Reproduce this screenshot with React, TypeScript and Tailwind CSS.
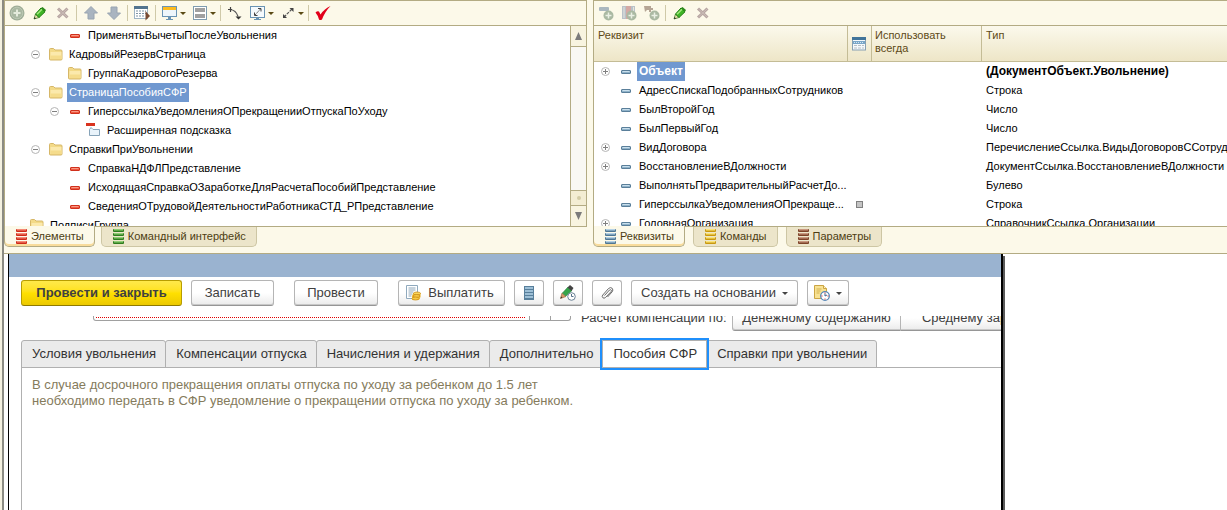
import type { ReactNode } from 'react'
import clsx from 'clsx'

interface TreeRow {
    name: string
    level: number
    icon: 'field' | 'folder' | 'hint'
    open?: boolean
    selected?: boolean
}

interface Attribute {
    name: string
    type: string
    expandable?: boolean
    selected?: boolean
    always?: boolean
}

const elements: TreeRow[] = [
    { name: 'ПрименятьВычетыПослеУвольнения', level: 2, icon: 'field' },
    { name: 'КадровыйРезервСтраница', level: 1, icon: 'folder', open: true },
    { name: 'ГруппаКадровогоРезерва', level: 2, icon: 'folder' },
    { name: 'СтраницаПособияСФР', level: 1, icon: 'folder', open: true, selected: true },
    { name: 'ГиперссылкаУведомленияОПрекращенииОтпускаПоУходу', level: 2, icon: 'field', open: true },
    { name: 'Расширенная подсказка', level: 3, icon: 'hint' },
    { name: 'СправкиПриУвольнении', level: 1, icon: 'folder', open: true },
    { name: 'СправкаНДФЛПредставление', level: 2, icon: 'field' },
    { name: 'ИсходящаяСправкаОЗаработкеДляРасчетаПособийПредставление', level: 2, icon: 'field' },
    { name: 'СведенияОТрудовойДеятельностиРаботникаСТД_РПредставление', level: 2, icon: 'field' },
    { name: 'ПодписиГруппа', level: 0, icon: 'folder' },
]

const attributes: Attribute[] = [
    { name: 'Объект', type: '(ДокументОбъект.Увольнение)', expandable: true, selected: true },
    { name: 'АдресСпискаПодобранныхСотрудников', type: 'Строка' },
    { name: 'БылВторойГод', type: 'Число' },
    { name: 'БылПервыйГод', type: 'Число' },
    { name: 'ВидДоговора', type: 'ПеречислениеСсылка.ВидыДоговоровССотруд...', expandable: true },
    { name: 'ВосстановлениеВДолжности', type: 'ДокументСсылка.ВосстановлениеВДолжности', expandable: true },
    { name: 'ВыполнятьПредварительныйРасчетДо...', type: 'Булево' },
    { name: 'ГиперссылкаУведомленияОПрекраще...', type: 'Строка', always: true },
    { name: 'ГоловнаяОрганизация', type: 'СправочникСсылка.Организации', expandable: true },
]

const indents = ['pl-[2px]', 'pl-[21px]', 'pl-[40px]', 'pl-[59px]']

const formTabs = [
    'Условия увольнения',
    'Компенсации отпуска',
    'Начисления и удержания',
    'Дополнительно',
    'Пособия СФР',
    'Справки при увольнении',
]

/* ---------- icons ---------- */

const Svg = ({ children, w = 16, h = 16 }: { children: ReactNode; w?: number; h?: number }) => (
    <svg width={w} height={h} viewBox={`0 0 ${w} ${h}`} className="shrink-0" aria-hidden="true">
        {children}
    </svg>
)

const AddIcon = () => (
    <Svg>
        <circle cx="8" cy="8" r="7.5" fill="#9fae98" />
        <circle cx="8" cy="8" r="5.8" fill="#a9b8a2" stroke="#bcc8b4" />
        <path d="M8 4.5v7M4.5 8h7" stroke="#e4ebdc" strokeWidth="2" />
    </Svg>
)

const PencilIcon = () => (
    <Svg>
        <path d="M2 14l1.5-5L7 12.5z" fill="#efe3b0" stroke="#3d7a26" strokeWidth=".8" />
        <path d="M3.5 9L9 3l4 3.8-6 5.7z" fill="#3fb526" stroke="#1f7d12" />
        <path d="M5 9.2l5-5" stroke="#a4ea7f" strokeWidth="1.4" />
        <path d="M9 3l1.5-1 3.5 3-1 1.8z" fill="#2d8a1c" />
        <path d="M2 14l.6-2 1.4 1.4z" fill="#222" />
    </Svg>
)

const CrossIcon = () => (
    <Svg>
        <path d="M3 3.5l9.5 9M12.5 3.5L3 12.5" stroke="#b7a6a2" strokeWidth="3" />
        <path d="M3.5 4l8.5 8M12 4l-8.5 8" stroke="#cbbdb8" strokeWidth="1" />
    </Svg>
)

const ArrowIcon = ({ down }: { down?: boolean }) => (
    <Svg>
        <path
            d={down ? 'M5 2h6v6h3.500L8 14.500 1.500 8H5z' : 'M5 14h6V8h3.500L8 1.500 1.500 8H5z'}
            fill="#a9b4c0"
            stroke="#98a4b1"
        />
    </Svg>
)

const TableIcon = () => (
    <Svg>
        <rect x=".5" y="1.500" width="13" height="12" fill="#fff" stroke="#9fb4c4" />
        <rect x="0" y="1" width="14" height="3" fill="#52748f" />
        <path d="M2 6h10M2 8.500h10M2 11h9" stroke="#7d93a4" strokeWidth="1.200" strokeDasharray="2 1" />
        <path d="M11.500 6v9.500L16 11z" fill="#7a4a30" />
    </Svg>
)

const WindowIcon = () => (
    <Svg>
        <rect x=".5" y="1.500" width="14" height="10" fill="#eef6fb" stroke="#6a94b4" />
        <rect x="1" y="2" width="13" height="3" fill="#fdbb1f" />
        <path d="M6 12h3v2H6zM4 14h7v1H4z" fill="#6a94b4" />
    </Svg>
)

const SplitIcon = () => (
    <Svg>
        <rect x="1.500" y="1.500" width="13" height="13" fill="#fff" stroke="#7f9cb0" />
        <path d="M3 3h10v4H3zM3 9h10v4H3z" fill="#a0a0a0" />
    </Svg>
)

const CurveIcon = () => (
    <Svg>
        <path d="M3 4.500q6 .5 8 7" fill="none" stroke="#555" strokeWidth="1.200" />
        <path d="M3.500 2v5M1 4.500h4" fill="none" stroke="#444" strokeWidth="1.200" />
        <path d="M8.500 11.500h6L11.500 14.500z" fill="#333" />
    </Svg>
)

const ScreenIcon = () => (
    <Svg>
        <rect x=".5" y="1.500" width="14" height="11" fill="#f5fafd" stroke="#6a94b4" />
        <path d="M5 10l5.500-6" stroke="#555" strokeDasharray="2 1" />
        <path d="M8 3.500h3v3M4.500 7.500v3h3" fill="none" stroke="#444" />
        <path d="M6 13h3v1H6zM4 14h7v1H4z" fill="#6a94b4" />
    </Svg>
)

const DiagonalIcon = () => (
    <Svg>
        <path d="M4 12l8-8" stroke="#555" strokeWidth="1.200" strokeDasharray="3 1" />
        <path d="M9.500 3h4v4zM3 9v4h4z" fill="#444" />
    </Svg>
)

const CheckIcon = () => (
    <Svg>
        <path d="M.5 7.500q2-2 3.500-1l1.500 3Q9.500 3.500 15.500 1 10 6.500 7 14.500q-2 1-3 0-1-4-3.500-7z" fill="#e2001a" />
    </Svg>
)

const AddAttributeIcon = () => (
    <Svg>
        <rect x="1" y="2" width="10" height="4" rx="1" fill="#aab7bf" />
        <circle cx="10.500" cy="10.500" r="5" fill="#aab9a2" />
        <path d="M10.500 7.500v6M7.500 10.500h6" stroke="#eaf0e4" strokeWidth="1.500" />
    </Svg>
)

const AddColumnIcon = () => (
    <Svg>
        <rect x="1" y="1" width="13" height="13" fill="#b9c2c8" />
        <path d="M3 2v11M12.500 2v11" stroke="#e6e6e0" />
        <rect x="5" y="1" width="5" height="13" fill="#d4a9a4" />
        <circle cx="10.500" cy="10.500" r="5" fill="#aab9a2" />
        <path d="M10.500 7.500v6M7.500 10.500h6" stroke="#eaf0e4" strokeWidth="1.500" />
    </Svg>
)

const AddCommandIcon = () => (
    <Svg>
        <path d="M0 1h7v2h2v2H7v2H5V5H3l-2 2z" fill="#b5a595" />
        <circle cx="10.500" cy="10.500" r="5" fill="#aab9a2" />
        <path d="M10.500 7.500v6M7.500 10.500h6" stroke="#eaf0e4" strokeWidth="1.500" />
    </Svg>
)

const FolderIcon = () => (
    <Svg>
        <path d="M1.500 2.500q0-1 1-1h3l1.500 1.500h6q1 0 1 1v8q0 1-1 1H2.500q-1 0-1-1z" fill="#f3da88" stroke="#d6b768" />
        <path d="M2.500 5h11v7h-11z" fill="#fbe9ac" />
        <path d="M2.500 8.500h11V12h-11z" fill="#f5dc8c" />
    </Svg>
)

const FieldIcon = ({ blue }: { blue?: boolean }) => (
    <Svg w={10} h={4}>
        <rect x=".5" y=".5" width="9" height="3" rx=".5" fill={blue ? '#8fb2c9' : '#ee5a42'} stroke={blue ? '#5a7f9a' : '#d0301c'} />
        <path d="M1.500 1.500h7" stroke={blue ? '#c9dfec' : '#f79a86'} />
    </Svg>
)

const HintIcon = () => (
    <Svg>
        <rect x="0" y="0" width="9" height="3" fill="#d9331f" />
        <path d="M3.500 12.500V6.500l1.500-2 2 2h6.500v6z" fill="#e9f3fa" stroke="#86a3b8" />
    </Svg>
)

const Expander = ({ open }: { open?: boolean }) => (
    <Svg w={9} h={9}>
        <circle cx="4.500" cy="4.500" r="4" fill="#fff" stroke="#b4b4b4" />
        <path d={open ? 'M2 4.500h5' : 'M2 4.500h5M4.500 2v5'} stroke="#808080" />
    </Svg>
)

const StackIcon = ({ fill, dark }: { fill: string; dark: string }) => (
    <Svg w={11} h={15}>
        {[0, 4, 8, 12].map((y) => (
            <g key={y}>
                <rect x="0" y={y} width="11" height="3" rx="1" fill={dark} />
                <rect x="1" y={y} width="9" height="1.500" fill={fill} />
            </g>
        ))}
    </Svg>
)

const Caret = ({ color = '#5a4a14' }: { color?: string }) => (
    <Svg w={6} h={3}>
        <path d="M0 0h6L3 3z" fill={color} />
    </Svg>
)

const ListWindowIcon = () => (
    <Svg w={14} h={14}>
        <rect x=".5" y=".5" width="13" height="12.500" fill="#f4f8fb" stroke="#88a0b2" />
        <rect x="0" y="0" width="14" height="3" fill="#41749a" />
        <rect x="1" y="4" width="12" height="3" fill="#79a6c8" />
        <path d="M2 5.500h10" stroke="#d6e6f2" strokeDasharray="1 1" />
        <path d="M2 8.500h10M2 11h10" stroke="#b6bec4" strokeDasharray="3 1" />
    </Svg>
)

const PayIcon = () => (
    <Svg>
        <path d="M1.500.5h11v13h-11z" fill="#fff" stroke="#8fa9bd" />
        <path d="M3.500 3h7M3.500 5h7M3.500 7h5M3.500 9h4M3.500 11h3" stroke="#8ca5b8" />
        <path d="M8.500 8h7v4l-1.500 3h-7v-4z" fill="#f3bb2e" />
        <ellipse cx="12" cy="8.500" rx="3.500" ry="1.500" fill="#fbd65a" stroke="#c98d1a" strokeWidth=".8" />
        <ellipse cx="11.500" cy="11" rx="3.500" ry="1.500" fill="#f6c945" stroke="#c98d1a" strokeWidth=".8" />
        <ellipse cx="10.500" cy="13.500" rx="3.500" ry="1.500" fill="#f6c945" stroke="#c98d1a" strokeWidth=".8" />
    </Svg>
)

const RegisterIcon = () => (
    <Svg>
        <rect x="3" y="1" width="10" height="14" fill="#587f9b" />
        <path d="M4 3h8M4 6h8M4 9h8M4 12h8" stroke="#9dbfd6" strokeWidth="2" />
    </Svg>
)

const PencilClockIcon = () => (
    <Svg>
        <path d="M.5 13.500L2 8l4 3.500z" fill="#d89a6a" stroke="#8a5a30" strokeWidth=".6" />
        <path d="M2.500 8L8 2l4 3.500-6 5.500z" fill="#36a54a" stroke="#23803a" strokeWidth=".6" />
        <path d="M7.500 2.500L10 0l3.500 3-2 3z" fill="#444" />
        <path d="M.5 13.500l.6-2 1.400 1.200z" fill="#333" />
        <circle cx="11.500" cy="11.500" r="3.800" fill="#fff" stroke="#6b8296" />
        <path d="M11.500 9v2.500h2" fill="none" stroke="#54718a" />
    </Svg>
)

const ClipIcon = () => (
    <Svg>
        <path
            d="M5.500 10.500l5-5.500q1-.8 1.700 0 .6.800-.2 1.700L6.500 12.500q-1.500 1.300-2.700.2-1.200-1.200 0-2.700L9.500 3.500q2-1.700 3.700-.2 1.500 1.700-.2 3.700L8.500 12"
            fill="none"
            stroke="#6a6a6a"
            strokeWidth="1"
        />
    </Svg>
)

const NoteClockIcon = () => (
    <Svg>
        <path d="M.5.5h9l3 3v10H.5z" fill="#f8e293" stroke="#cba544" />
        <path d="M9.500.5v3h3" fill="#fff3c4" stroke="#cba544" />
        <path d="M2.500 4h5M2.500 6h4M2.500 8h3" stroke="#d3b251" />
        <circle cx="11" cy="11" r="4.300" fill="#fff" stroke="#5787b5" strokeWidth="1.300" />
        <path d="M11 11V8.500M11 11l2-1" stroke="#3b6591" />
        <path d="M10.500 7.500h1v1h-1zM10.500 13.500h1v1h-1zM7.500 10.500h1v1h-1zM13.500 10.500h1v1h-1z" fill="#d22" />
    </Svg>
)

/* ---------- designer panels ---------- */

const Tool = ({ label, caret, children }: { label: string; caret?: boolean; children: ReactNode }) => (
    <button
        aria-label={label}
        className={clsx('flex h-6 shrink-0 items-center', caret ? 'w-[30px] gap-0.5 pl-1' : 'w-[23px] justify-center')}
    >
        {children}
        {caret && <Caret />}
    </button>
)

const Separator = () => (
    <div className="flex h-6 w-[5px] shrink-0 justify-center py-1">
        <div className="w-px bg-[#cfc9a8]" />
    </div>
)

const PanelTab = ({ active, icon, children }: { active?: boolean; icon: ReactNode; children: ReactNode }) => (
    <button
        role="tab"
        aria-selected={!!active}
        className={clsx(
            'flex items-center gap-1 rounded-b-[5px] border border-t-0 pr-[10px] pl-[11px] text-[#4d3d12]',
            active
                ? 'relative -mt-px h-[21px] border-[#b3ab83] bg-[#fcf9e9] shadow-[inset_0_-2px_0_#f9dc9c]'
                : 'h-5 border-[#cdc6a4] bg-[#ece5ca]',
        )}
    >
        {icon}
        {children}
    </button>
)

const ElementsTree = () => (
    <ul className="min-w-0 flex-1 overflow-hidden bg-white" role="tree">
        {elements.map((row) => (
            <li
                key={row.name}
                role="treeitem"
                aria-selected={!!row.selected}
                className={clsx('flex h-[19px] items-center whitespace-nowrap', indents[row.level])}
            >
                <span className="flex w-[19px] shrink-0 justify-center">{row.open && <Expander open />}</span>
                <span className="flex w-[22px] shrink-0 justify-center">
                    {row.icon === 'folder' && <FolderIcon />}
                    {row.icon === 'field' && <FieldIcon />}
                    {row.icon === 'hint' && <HintIcon />}
                </span>
                <span className={clsx('px-0.5 leading-[19px]', row.selected && 'bg-[#7098d0] text-white')}>{row.name}</span>
            </li>
        ))}
    </ul>
)

const Scrollbar = () => (
    <div className="flex w-4 shrink-0 flex-col border-l border-[#b3ab83] bg-[#f9f8f3]">
        <div className="flex h-[21px] items-center justify-center border-b border-[#b3ab83] bg-[#f8f4e0]">
            <Svg w={7} h={8}>
                <path d="M3.500 0L7 8H0z" fill="#7b7b7b" />
            </Svg>
        </div>
        <div className="flex-1" />
        <div className="flex h-4 items-center justify-center border-y border-[#b3ab83] bg-[#f3edd3]">
            <div className="size-1 rounded-full bg-[#d3cba6]" />
        </div>
        <div className="flex h-5 items-center justify-center bg-[#f8f4e0]">
            <Svg w={7} h={8}>
                <path d="M0 0h7L3.500 8z" fill="#7b7b7b" />
            </Svg>
        </div>
    </div>
)

const ElementsPanel = () => (
    <section className="min-w-0">
        <div className="flex h-[227px] flex-col border border-[#b3ab83]">
            <div className="flex h-[25px] shrink-0 border-b border-[#b3ab83]">
                <Tool label="Добавить"><AddIcon /></Tool>
                <Tool label="Изменить"><PencilIcon /></Tool>
                <Tool label="Удалить"><CrossIcon /></Tool>
                <Separator />
                <Tool label="Вверх"><ArrowIcon /></Tool>
                <Tool label="Вниз"><ArrowIcon down /></Tool>
                <Separator />
                <Tool label="Таблица"><TableIcon /></Tool>
                <Separator />
                <Tool label="Вид" caret><WindowIcon /></Tool>
                <Tool label="Группировка" caret><SplitIcon /></Tool>
                <Separator />
                <Tool label="Порядок"><CurveIcon /></Tool>
                <Tool label="Экран" caret><ScreenIcon /></Tool>
                <Tool label="Размер" caret><DiagonalIcon /></Tool>
                <Separator />
                <Tool label="Проверить"><CheckIcon /></Tool>
            </div>
            <div className="flex min-h-0 flex-1">
                <ElementsTree />
                <Scrollbar />
            </div>
        </div>
        <div className="flex gap-[6px]" role="tablist">
            <PanelTab active icon={<StackIcon fill="#f58a76" dark="#cf2a18" />}>Элементы</PanelTab>
            <PanelTab icon={<StackIcon fill="#8fcf74" dark="#2f7d1f" />}>Командный интерфейс</PanelTab>
        </div>
    </section>
)

const AttributesPanel = () => (
    <section className="min-w-0">
        <div className="flex h-[227px] flex-col overflow-hidden border border-r-0 border-[#b3ab83]">
            <div className="flex h-[25px] shrink-0 border-b border-[#b3ab83]">
                <Tool label="Добавить реквизит"><AddAttributeIcon /></Tool>
                <Tool label="Добавить колонку"><AddColumnIcon /></Tool>
                <Tool label="Добавить команду"><AddCommandIcon /></Tool>
                <Separator />
                <Tool label="Изменить"><PencilIcon /></Tool>
                <Tool label="Удалить"><CrossIcon /></Tool>
            </div>
            <div className="min-h-0 flex-1 overflow-hidden bg-white">
                <table className="w-full table-fixed border-separate border-spacing-0">
                    <colgroup>
                        <col className="w-[254px]" />
                        <col className="w-[24px]" />
                        <col className="w-[110px]" />
                        <col />
                    </colgroup>
                    <thead>
                        <tr className="h-9 bg-linear-to-b from-[#fbf9ec] to-[#ede5c6] text-left align-top leading-[13px] text-[#5e4a17]">
                            <th className="border-r border-b border-[#c4bc96] px-1 pt-[3px] font-normal">Реквизит</th>
                            <th className="border-r border-b border-[#c4bc96] pt-[11px] pl-1" aria-label="Вид">
                                <ListWindowIcon />
                            </th>
                            <th className="border-r border-b border-[#c4bc96] px-[3px] pt-[3px] font-normal">
                                Использовать всегда
                            </th>
                            <th className="border-b border-[#c4bc96] px-1 pt-[3px] font-normal">Тип</th>
                        </tr>
                    </thead>
                    <tbody>
                        {attributes.map((row) => (
                            <tr
                                key={row.name}
                                className={clsx('h-[19px] whitespace-nowrap', row.selected && 'text-[12px] font-bold')}
                            >
                                <td className="overflow-hidden p-0">
                                    <div className="flex h-[19px] items-center pl-[2px]">
                                        <span className="flex w-[19px] shrink-0 justify-center">
                                            {row.expandable && <Expander />}
                                        </span>
                                        <span className="flex w-[22px] shrink-0 justify-center">
                                            <FieldIcon blue />
                                        </span>
                                        <span className={clsx('px-0.5 leading-[19px]', row.selected && 'bg-[#7098d0] text-white')}>
                                            {row.name}
                                        </span>
                                    </div>
                                </td>
                                <td className="p-0 pl-2">
                                    {row.always && <div className="size-[7px] border border-[#808080] bg-[#c4c4c4]" />}
                                </td>
                                <td className="p-0" />
                                <td className="overflow-hidden p-0 pl-1 leading-[19px]">{row.type}</td>
                            </tr>
                        ))}
                    </tbody>
                </table>
            </div>
        </div>
        <div className="flex gap-2" role="tablist">
            <PanelTab active icon={<StackIcon fill="#b5d2e6" dark="#4f7794" />}>Реквизиты</PanelTab>
            <PanelTab icon={<StackIcon fill="#fbe57a" dark="#c9980f" />}>Команды</PanelTab>
            <PanelTab icon={<StackIcon fill="#c99880" dark="#7d4228" />}>Параметры</PanelTab>
        </div>
    </section>
)

/* ---------- document form ---------- */

const FormButton = ({ className, label, children }: { className: string; label?: string; children: ReactNode }) => (
    <button
        aria-label={label}
        className={clsx(
            'flex h-[26px] shrink-0 items-center justify-center rounded-[3px] border border-[#b5b5b5] border-b-[#969696] bg-linear-to-b from-white from-50% to-[#ebebeb] whitespace-nowrap shadow-[inset_0_-1px_0_#c8c8c8]',
            className,
        )}
    >
        {children}
    </button>
)

const DocumentForm = () => (
    <section className="mr-[224px] ml-1 flex flex-1 flex-col border-r-2 border-l border-black bg-white text-[13px] text-[#404040] shadow-[2px_2px_0_#5a5a5a]">
        <div className="h-[23px] shrink-0 bg-[#9ab3d0]" />
        <div className="flex gap-[9px] pt-[3px] pl-3">
            <button className="h-[26px] w-[161px] shrink-0 rounded-[3px] border border-[#b89d00] border-b-[#8f7a00] bg-linear-to-b from-[#ffe94a] via-[#ffe000] to-[#ecc900] font-bold whitespace-nowrap">
                Провести и закрыть
            </button>
            <FormButton className="w-[83px]">Записать</FormButton>
            <FormButton className="ml-[11px] w-[84px]">Провести</FormButton>
            <FormButton className="ml-[11px] w-[107px] gap-[7px] pr-1">
                <PayIcon />
                Выплатить
            </FormButton>
            <FormButton className="w-[30px]" label="Движения документа"><RegisterIcon /></FormButton>
            <FormButton className="w-[30px]" label="Исправление"><PencilClockIcon /></FormButton>
            <FormButton className="w-[30px]" label="Файлы"><ClipIcon /></FormButton>
            <FormButton className="w-[167px] gap-[6px]">
                Создать на основании
                <Caret color="#444" />
            </FormButton>
            <FormButton className="w-[42px] gap-[6px]" label="Напоминания">
                <NoteClockIcon />
                <Caret color="#444" />
            </FormButton>
        </div>

        {/* scrolled content, only the lower part of the row is visible */}
        <div className="mt-[10px] flex h-[15px] overflow-hidden pl-[84px]">
            <div className="flex h-[5px] w-[478px] shrink-0 items-end overflow-hidden rounded-b-[3px] border-x border-b border-[#a0a0a0]">
                <input
                    aria-label="Основание"
                    className="mb-[2px] ml-[2px] h-[22px] min-w-0 flex-1 border-b border-dotted border-[#e00000] outline-none"
                />
                <div className="ml-1 h-[22px] w-[21px] border-l border-[#a0a0a0]" />
                <div className="h-[22px] w-5 border-l border-[#a0a0a0]" />
            </div>
            <div className="ml-[10px] flex h-[15px] shrink-0 items-end">
                <span className="w-[151px] leading-[26px] whitespace-nowrap">Расчет компенсации по:</span>
                <FormButton className="w-[169px] rounded-r-none">Денежному содержанию</FormButton>
                <FormButton className="-ml-px w-[169px] rounded-l-none">Среднему заработку</FormButton>
            </div>
        </div>

        <div className="mt-[9px] flex pl-3" role="tablist">
            {formTabs.map((tab) => {
                const active = tab === 'Пособия СФР'
                return (
                    <button
                        key={tab}
                        role="tab"
                        aria-selected={active}
                        className={clsx(
                            '-mr-px h-7 shrink-0 border border-[#b0b0b0] pr-[9px] pl-[10px] whitespace-nowrap text-[#333]',
                            active ? 'relative bg-white outline-2 outline-[#1f8ffb]' : 'rounded-t-[3px] bg-[#ebebeb]',
                        )}
                    >
                        {tab}
                    </button>
                )
            })}
        </div>
        <div className="-mt-px ml-3 flex-1 border-t border-l border-[#b0b0b0] px-[10px] pt-[9px] leading-4 text-[#857b5c]">
            <p>
                В случае досрочного прекращения оплаты отпуска по уходу за ребенком до 1.5 лет
                <br />
                необходимо передать в СФР уведомление о прекращении отпуска по уходу за ребенком.
            </p>
        </div>
    </section>
)

export default function App() {
    return (
        <div className="flex min-h-screen overflow-hidden bg-white font-['Liberation_Sans',Arial,sans-serif] text-[11px] text-black">
            <div className="w-1 shrink-0 border-r-2 border-[#8b8b83] bg-[#f4f1e0]" />
            <div className="flex min-w-0 flex-1 flex-col">
                <div className="grid h-[254px] shrink-0 grid-cols-[583fr_634fr] gap-[6px] border-b border-[#b3ab83] bg-[#fcf9e9]">
                    <ElementsPanel />
                    <AttributesPanel />
                </div>
                <DocumentForm />
            </div>
        </div>
    )
}
